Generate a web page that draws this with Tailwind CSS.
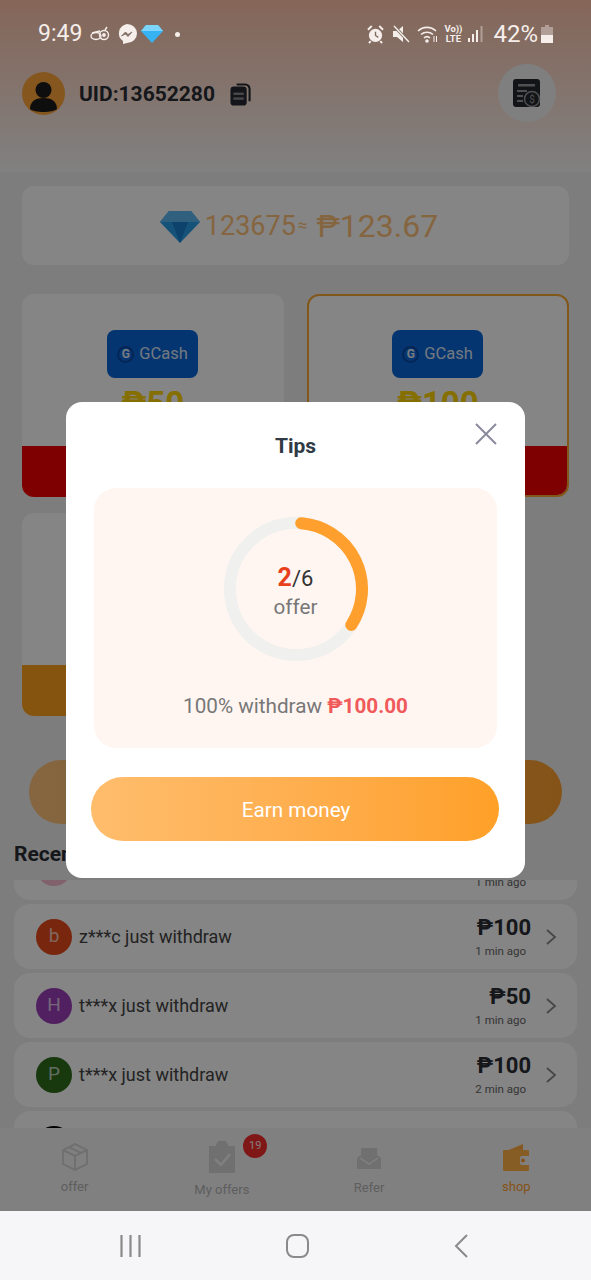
<!DOCTYPE html>
<html lang="en">
<head>
    <meta charset="UTF-8">
    <meta name="viewport" content="width=device-width, initial-scale=1.0">
    <title>Shop</title>
    <script src="https://cdn.jsdelivr.net/npm/@tailwindcss/browser@4"></script>
</head>
<body class="bg-white font-[Roboto,sans-serif]">
    <div class="relative w-[591px] h-[1280px] overflow-hidden">
        <!-- page behind the dialog -->
        <div class="h-[1211px] flex flex-col bg-[#f0f0f0]">
            <header class="h-[172px] shrink-0 bg-linear-to-b from-[#ffc4aa] to-[#f6f6f6] flex items-end justify-between pl-[22px] pr-[35px] pb-[50px]">
                <div class="flex items-center">
                    <div class="w-[43px] h-[43px] rounded-full bg-[#ffa63a] overflow-hidden mb-[7px]">
                        <svg viewBox="0 0 43 43" class="w-full h-full"><circle cx="21.5" cy="18" r="8" fill="#1c1c1c"/><path d="M8 37c0-8 6-11 13.500-11S35 29 35 37c-4 4-23 4-27 0z" fill="#1c1c1c"/></svg>
                    </div>
                    <span class="ml-[14px] text-[21px] font-bold text-[#2a2d34] mb-[5px]">UID:13652280</span>
                    <svg viewBox="0 0 22 24" class="ml-[15px] w-[21px] h-[23px] mb-[6px]"><path d="M7 1.500h9a5 5 0 0 1 4.500 4.500v13" fill="none" stroke="#262a33" stroke-width="2.200"/><rect x="0.500" y="3.500" width="17" height="20" rx="3.500" fill="#262a33"/><rect x="3.500" y="10" width="11" height="2.500" fill="#8a8a8a"/><rect x="3.500" y="15" width="11" height="2.500" fill="#8a8a8a"/></svg>
                </div>
                <div class="w-[58px] h-[58px] rounded-full bg-[#f4f4f6] flex items-center justify-center">
                    <svg viewBox="0 0 28 28" class="w-[28px] h-[28px]"><rect x="0" y="0" width="27" height="28" rx="3" fill="#23272e"/><rect x="5" y="5" width="17" height="2.500" fill="#9a9a9a"/><path d="M4 12h10M4 17h6M4 22h6" stroke="#9a9a9a" stroke-width="2"/><circle cx="19" cy="20" r="7.500" fill="#23272e" stroke="#9a9a9a" stroke-width="1.500"/><text x="19" y="24" font-size="10" text-anchor="middle" fill="#9a9a9a">$</text></svg>
                </div>
            </header>

            <div class="mt-[14px] mx-[22px] h-[79px] shrink-0 rounded-[12px] bg-white flex items-center justify-center pl-[7px] pt-[1px]">
                <svg viewBox="0 0 40 32" class="w-[40px] h-[32px] mt-[2px]"><polygon points="9,0 31,0 40,11 20,32 0,11" fill="#2a9de8"/><polygon points="9,0 31,0 40,11 0,11" fill="#5cb8f0"/><polygon points="12,11 28,11 20,32" fill="#1a7fd0"/></svg>
                <span class="ml-[5px] text-[27px] leading-none text-[#ffc27a]">123675</span><span class="ml-[2px] text-[17px] text-[#ffc27a] mr-[9px]">≈</span><span class="text-[32px] leading-none text-[#ffc27a]">₱123.67</span>
            </div>

            <div class="mt-[29px] mx-[22px] grid grid-cols-2 gap-x-[23px] gap-y-[16px] shrink-0">
                <div class="h-[203px] rounded-[12px] bg-white overflow-hidden flex flex-col items-center">
                    <div class="mt-[36px] mr-[1px] w-[91px] h-[48px] rounded-[8px] bg-[#0a66d8] flex items-center justify-center text-[16.500px] text-[#dfe8f5]">
                        <span class="w-[17px] h-[17px] rounded-full border-2 border-[#0a4aa4] flex items-center justify-center text-[12px] font-bold text-[#e4ecf8]">G</span>
                        <span class="ml-[5px]">GCash</span>
                    </div>
                    <div class="mt-[8px] text-[33px] leading-[36px] font-bold text-[#ffd500]">₱50</div>
                    <div class="mt-auto h-[51px] w-full bg-[#f20000]"></div>
                </div>
                <div class="h-[203px] rounded-[12px] bg-white overflow-hidden flex flex-col items-center border-2 border-[#f7a733]">
                    <div class="mt-[34px] mr-[1px] w-[91px] h-[48px] rounded-[8px] bg-[#0a66d8] flex items-center justify-center text-[16.500px] text-[#dfe8f5]">
                        <span class="w-[17px] h-[17px] rounded-full border-2 border-[#0a4aa4] flex items-center justify-center text-[12px] font-bold text-[#e4ecf8]">G</span>
                        <span class="ml-[5px]">GCash</span>
                    </div>
                    <div class="mt-[8px] text-[33px] leading-[36px] font-bold text-[#ffd500]">₱100</div>
                    <div class="mt-auto h-[49px] w-full bg-[#f20000]"></div>
                </div>
                <div class="h-[203px] rounded-[12px] bg-white overflow-hidden flex flex-col items-center">
                    <div class="mt-auto h-[51px] w-full bg-[#ffa31f]"></div>
                </div>
            </div>

            <div class="mt-[44px] mx-[29px] h-[64px] shrink-0 rounded-full bg-linear-to-r from-[#ffc47c] to-[#ffa02c]"></div>

            <div class="mt-[17px] ml-[14px] h-[26px] shrink-0 text-[21px] leading-[26px] font-bold text-[#2a2d34]">Recent withdraw</div>

            <div class="mt-[13px] mx-[14px] h-[248px] shrink-0 overflow-hidden">
                <div class="-mt-[45px] flex flex-col gap-[4px]">
                    <div class="h-[65px] shrink-0 rounded-[16px] bg-white flex items-center pl-[22px] pr-[20px]">
                        <div class="w-[36px] h-[36px] rounded-full bg-[#f8bcd0]"></div>
                        <div class="ml-auto flex flex-col items-end">
                            <div class="h-[27px]"></div>
                            <span class="mt-[2px] mr-[5px] text-[11.500px] leading-[17px] text-[#666]">1 min ago</span>
                        </div>
                        <svg viewBox="0 0 11 16" class="ml-[15px] w-[11px] h-[16px]"></svg>
                    </div>
                    <div class="h-[65px] shrink-0 rounded-[16px] bg-white flex items-center pl-[22px] pr-[20px]">
                        <div class="w-[36px] h-[36px] rounded-full bg-[#e64a19] flex items-center justify-center text-[19px] text-white/70">b</div>
                        <span class="ml-[7px] text-[18px] text-[#444]">z***c just withdraw</span>
                        <div class="ml-auto flex flex-col items-end">
                            <span class="text-[22px] leading-[27px] font-bold text-[#2a2d34]">₱100</span>
                            <span class="mt-[2px] mr-[5px] text-[11.500px] leading-[17px] text-[#666]">1 min ago</span>
                        </div>
                        <svg viewBox="0 0 11 16" class="ml-[15px] w-[11px] h-[16px]" fill="none" stroke="#888" stroke-width="1.800"><path d="M1 1l8 7-8 7"/></svg>
                    </div>
                    <div class="h-[65px] shrink-0 rounded-[16px] bg-white flex items-center pl-[22px] pr-[20px]">
                        <div class="w-[36px] h-[36px] rounded-full bg-[#9c3fb8] flex items-center justify-center text-[19px] text-white/70">H</div>
                        <span class="ml-[7px] text-[18px] text-[#444]">t***x just withdraw</span>
                        <div class="ml-auto flex flex-col items-end">
                            <span class="text-[22px] leading-[27px] font-bold text-[#2a2d34]">₱50</span>
                            <span class="mt-[2px] mr-[5px] text-[11.500px] leading-[17px] text-[#666]">1 min ago</span>
                        </div>
                        <svg viewBox="0 0 11 16" class="ml-[15px] w-[11px] h-[16px]" fill="none" stroke="#888" stroke-width="1.800"><path d="M1 1l8 7-8 7"/></svg>
                    </div>
                    <div class="h-[65px] shrink-0 rounded-[16px] bg-white flex items-center pl-[22px] pr-[20px]">
                        <div class="w-[36px] h-[36px] rounded-full bg-[#2e6b1c] flex items-center justify-center text-[19px] text-white/70">P</div>
                        <span class="ml-[7px] text-[18px] text-[#444]">t***x just withdraw</span>
                        <div class="ml-auto flex flex-col items-end">
                            <span class="text-[22px] leading-[27px] font-bold text-[#2a2d34]">₱100</span>
                            <span class="mt-[2px] mr-[5px] text-[11.500px] leading-[17px] text-[#666]">2 min ago</span>
                        </div>
                        <svg viewBox="0 0 11 16" class="ml-[15px] w-[11px] h-[16px]" fill="none" stroke="#888" stroke-width="1.800"><path d="M1 1l8 7-8 7"/></svg>
                    </div>
                    <div class="h-[65px] shrink-0 rounded-[16px] bg-white flex items-center pl-[22px] pr-[20px]">
                        <div class="w-[36px] h-[36px] rounded-full bg-black"></div>
                    </div>
                </div>
            </div>

            <nav class="h-[83px] shrink-0 bg-[#f6f6f6] grid grid-cols-4 px-[1px]">
                <div class="flex flex-col items-center pt-[15px]">
                    <svg viewBox="0 0 28 28" class="w-[28px] h-[28px]" fill="none" stroke="#d6d6d6" stroke-width="2"><path d="M14 1l12 6v14l-12 6-12-6V7z"/><path d="M2 7l12 6 12-6M14 13v14M8 4l12 6"/></svg>
                    <span class="mt-[8px] text-[13px] leading-[16px] text-[#b4b4b4]">offer</span>
                </div>
                <div class="relative flex flex-col items-center pt-[13px]">
                    <svg viewBox="0 0 28 32" class="w-[28px] h-[32px]"><path d="M1 5h7a6 6 0 0 1 12 0h7v27H1z" fill="#d6d6d6"/><path d="M7 18l6 6 9-11" fill="none" stroke="#f6f6f6" stroke-width="2.500"/></svg>
                    <span class="mt-[9px] text-[13px] leading-[16px] text-[#b4b4b4]">My offers</span>
                    <div class="absolute top-[6px] left-[95px] w-[24px] h-[24px] rounded-full bg-[#f42c2c] flex items-center justify-center text-[11px] text-white/90">19</div>
                </div>
                <div class="flex flex-col items-center pt-[19px]">
                    <svg viewBox="0 0 24 22" class="w-[24px] h-[22px]"><path d="M4 8V1h16v7l4 3v11H0V11z" fill="#d6d6d6"/><path d="M3 11l9 6 9-6" fill="none" stroke="#f6f6f6" stroke-width="1.500"/></svg>
                    <span class="mt-[11px] text-[13px] leading-[16px] text-[#b4b4b4]">Refer</span>
                </div>
                <div class="flex flex-col items-center pt-[16px]">
                    <svg viewBox="0 0 27 27" class="w-[27px] h-[27px]"><path d="M3 7L20 0v7z" fill="#ffab40"/><rect x="0" y="6" width="26" height="21" rx="1" fill="#ffb347"/><rect x="17" y="12" width="10" height="9" rx="2" fill="#f6f6f6"/><circle cx="20" cy="16.500" r="2" fill="#ffa030"/></svg>
                    <span class="mt-[8px] text-[13px] leading-[16px] text-[#ffa030]">shop</span>
                </div>
            </nav>
        </div>

        <!-- scrim -->
        <div class="absolute left-0 top-0 w-full h-[1211px] bg-black/[0.48]"></div>

        <!-- status bar -->
        <div class="absolute left-0 top-[20px] w-full h-[28px] flex items-center justify-between pl-[38px] pr-[38px] text-[#f5eeea]">
            <div class="flex items-center">
                <span class="text-[23px] leading-[28px]">9:49</span>
                <svg viewBox="0 0 20 16" class="ml-[8px] w-[20px] h-[16px]" fill="none" stroke="#f5eeea" stroke-width="1.400"><ellipse cx="6" cy="10" rx="5" ry="3.500"/><circle cx="14" cy="9" r="4.500"/><circle cx="14" cy="9" r="1.200" fill="#f5eeea"/><path d="M2 7l8-2M15 4l2-3"/></svg>
                <svg viewBox="0 0 20 20" class="ml-[7px] w-[20px] h-[20px]"><path d="M10 0a10 9.500 0 0 1 0 19l-4 1v-3A10 9.500 0 0 1 10 0z" fill="#f5eeea"/><path d="M4.500 12l4-4 2.500 2.500 4-2.500-4 4.500L8.500 10z" fill="#7d6a60" stroke="#7d6a60" stroke-width="0.800"/></svg>
                <svg viewBox="0 0 22 18" class="ml-[4px] w-[22px] h-[18px]"><polygon points="5,0 17,0 22,6 11,18 0,6" fill="#35b3f5"/><polygon points="5,0 17,0 22,6 0,6" fill="#7dd5fb"/></svg>
                <span class="ml-[12px] w-[5px] h-[5px] rounded-full bg-[#f5eeea]"></span>
            </div>
            <div class="flex items-center">
                <svg viewBox="0 0 18 20" class="w-[17px] h-[19px]"><circle cx="9" cy="11" r="7" fill="#f5eeea"/><path d="M9 7v4l3 2" stroke="#7d6a60" stroke-width="1.400" fill="none"/><path d="M1 5l4-4M17 5l-4-4M4 17l-2 2M14 17l2 2" stroke="#f5eeea" stroke-width="2"/></svg>
                <svg viewBox="0 0 18 18" class="ml-[8px] w-[18px] h-[18px]"><path d="M1 6h4l6-5v16l-6-5H1z" fill="#f5eeea"/><path d="M2 1l15 16" stroke="#7d6a60" stroke-width="3"/><path d="M2 1l15 16" stroke="#f5eeea" stroke-width="1.500"/></svg>
                <svg viewBox="0 0 22 18" class="ml-[7px] w-[22px] h-[18px]" fill="none" stroke="#f5eeea" stroke-width="1.600"><path d="M1 6a13 13 0 0 1 18 0M4 9.500a9 9 0 0 1 12 0M7 13a4.500 4.500 0 0 1 6 0"/><circle cx="10" cy="16" r="1" fill="#f5eeea"/><path d="M17 11v6M19.500 17v-6" stroke-width="1"/></svg>
                <div class="ml-[5px] flex flex-col items-center text-[9.500px] leading-[10px] font-bold"><span>Vo))</span><span>LTE</span></div>
                <svg viewBox="0 0 16 18" class="ml-[6px] w-[16px] h-[18px]"><rect x="0" y="13" width="2" height="4" fill="#f5eeea"/><rect x="4" y="9" width="2" height="8" fill="#f5eeea"/><rect x="8" y="5" width="2" height="12" fill="#f5eeea"/><rect x="12.500" y="1" width="2" height="16" fill="#f5eeea" fill-opacity="0.400"/></svg>
                <span class="ml-[9px] text-[24px] leading-[28px]">42%</span>
                <svg viewBox="0 0 12 18" class="ml-[3px] w-[12px] h-[18px]"><path d="M4 0h4v2h4v16H0V2h4z" fill="#f5eeea" fill-opacity="0.400"/><path d="M0 10h12v8H0z" fill="#f5eeea"/></svg>
            </div>
        </div>

        <!-- tips dialog -->
        <div class="absolute left-[66px] top-[402px] w-[459px] h-[476px] rounded-[16px] bg-white flex flex-col items-center">
            <h2 class="mt-[31px] text-[21px] leading-[26px] font-bold text-[#2f3a45]">Tips</h2>
            <button class="absolute right-[28px] top-[21px] w-[22px] h-[22px]" aria-label="Close">
                <svg viewBox="0 0 22 22" class="w-[22px] h-[22px]" fill="none" stroke="#8a8a9e" stroke-width="2"><path d="M1 1l20 20M21 1L1 21"/></svg>
            </button>
            <div class="mt-[29px] w-[403px] h-[260px] rounded-[22px] bg-[#fff6f2] flex flex-col items-center">
                <div class="relative mt-[29px] w-[144px] h-[144px]">
                    <svg viewBox="0 0 144 144" class="w-[144px] h-[144px]" fill="none" stroke-width="12">
                        <circle cx="72" cy="72" r="66" stroke="#f0f0ee"/>
                        <path d="M77.200 6.200A66 66 0 0 1 127.300 108" stroke="#ffa02e" stroke-linecap="round"/>
                    </svg>
                    <div class="absolute inset-0 pt-[6px] flex flex-col items-center justify-center">
                        <div class="leading-[28px] text-[#333] text-[22px]"><span class="text-[25px] font-bold text-[#e8401c]">2</span>/6</div>
                        <div class="mt-[1px] text-[20.700px] leading-[26px] text-[#777]">offer</div>
                    </div>
                </div>
                <p class="mt-[32px] text-[20.700px] leading-[26px] text-[#777]">100% withdraw <span class="font-bold text-[#f05a5a]">₱100.00</span></p>
            </div>
            <button class="mt-[29px] mr-[1px] w-[408px] h-[64px] pt-[4px] pl-[2px] rounded-full bg-linear-to-r from-[#ffbd6c] to-[#ffa027] text-[20.700px] text-white">Earn money</button>
        </div>

        <!-- android nav -->
        <div class="h-[69px] bg-[#f6f6f8] flex items-center justify-between pl-[120px] pr-[123px]">
            <svg viewBox="0 0 21 24" class="w-[21px] h-[24px]"><path d="M1.500 1v22M10.500 1v22M19.500 1v22" stroke="#8a8a8a" stroke-width="2.200"/></svg>
            <div class="w-[23px] h-[24px] rounded-[8px] border-2 border-[#8a8a8a]"></div>
            <svg viewBox="0 0 14 24" class="w-[14px] h-[24px]" fill="none" stroke="#8a8a8a" stroke-width="2"><path d="M13 1L2 12l11 11"/></svg>
        </div>
    </div>
</body>
</html>
